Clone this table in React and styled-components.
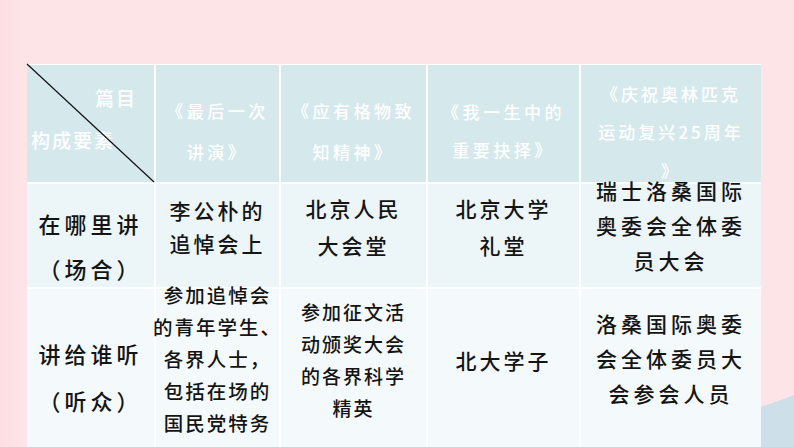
import React from 'react';
import styled, { createGlobalStyle } from 'styled-components';

const GlobalStyle = createGlobalStyle`
  html, body {
    margin: 0;
    padding: 0;
    overflow: hidden;
    background: #fde5e7;
  }
`;

const Page = styled.div`
  position: relative;
  width: 794px;
  height: 447px;
  box-sizing: border-box;
  padding: 64px 0 0 27px;
  overflow: hidden;
  background: linear-gradient(90deg, #fcdfe2 0px, #fde5e7 27px, #fde5e7 100%);
  font-family: 'Noto Sans CJK SC', 'Noto Sans', sans-serif;
`;

const Corner = styled.svg`
  position: absolute;
  right: 0;
  bottom: 0;
  width: 60px;
  height: 60px;
`;

const Table = styled.div`
  position: relative;
  display: grid;
  grid-template-columns: 127px 123px 145px 151px 180px;
  grid-template-rows: 117px 103px 171px;
  gap: 2px;
  width: max-content;
  background: #ffffff;
  border-top: 1px solid #ffffff;
`;

const tones = {
  head: '#d5e9ed',
  mid: '#ecf5f7',
  low: '#f4f9fb',
};

const Cell = styled.div`
  display: flex;
  flex-direction: column;
  justify-content: center;
  align-items: center;
  min-height: 0;
  box-sizing: border-box;
  padding-top: ${(p) => p.$pt || 0}px;
  padding-bottom: ${(p) => p.$pb || 0}px;
  background: ${(p) => tones[p.$tone]};
  text-align: center;
`;

const Text = styled.div`
  white-space: nowrap;
  font-size: ${(p) => p.$size}px;
  line-height: ${(p) => p.$lh}px;
  letter-spacing: ${(p) => p.$ls}px;
  color: ${(p) => (p.$light ? '#ffffff' : '#141414')};
  font-weight: 500;
`;

const CornerCell = styled.div`
  position: relative;
  display: flex;
  flex-direction: column;
  justify-content: center;
  box-sizing: border-box;
  padding: 0 17px 10px 4px;
  background: ${tones.head};
  color: #ffffff;
  font-size: 19px;
  font-weight: 500;
  line-height: 42px;
  letter-spacing: 2px;
`;

const CornerLabel = styled.div`
  text-align: ${(p) => p.$align};
  white-space: nowrap;
`;

const Diagonal = styled.svg`
  position: absolute;
  inset: 0;
  width: 100%;
  height: 100%;
  overflow: visible;
`;

const Lines = ({ lines, ...rest }) => (
  <Text {...rest}>
    {lines.map((l, i) => (
      <React.Fragment key={i}>
        {l}
        {i < lines.length - 1 && <br />}
      </React.Fragment>
    ))}
  </Text>
);

const head = { $size: 17, $lh: 41, $ls: 3.5, $light: true };

export default function App() {
  return (
    <>
      <GlobalStyle />
      <Page>
        <Corner viewBox="0 0 60 60">
          <path d="M0 60 L0 26 C12 24 30 20 60 8 L60 60 Z" fill="#cde0e9" />
        </Corner>
        <Table>
          <CornerCell>
            <CornerLabel $align="right">篇目</CornerLabel>
            <CornerLabel $align="left">构成要素</CornerLabel>
            <Diagonal>
              <line x1="0" y1="-1" x2="100%" y2="100%" stroke="#111" strokeWidth="1.2" />
            </Diagonal>
          </CornerCell>
          <Cell $tone="head" $pt={15}>
            <Lines {...head} lines={['《最后一次', '讲演》']} />
          </Cell>
          <Cell $tone="head" $pt={15}>
            <Lines {...head} lines={['《应有格物致', '知精神》']} />
          </Cell>
          <Cell $tone="head" $pt={15}>
            <Lines {...head} $lh={38} lines={['《我一生中的', '重要抉择》']} />
          </Cell>
          <Cell $tone="head" $pt={18}>
            <Lines {...head} $lh={38.5} $ls={3} lines={['《庆祝奥林匹克', '运动复兴25周年', '》']} />
          </Cell>

          <Cell $tone="mid" $pt={20}>
            <Lines $size={22} $lh={45} $ls={4} lines={['在哪里讲', '（场合）']} />
          </Cell>
          <Cell $tone="mid" $pb={18}>
            <Lines $size={21} $lh={33} $ls={3} lines={['李公朴的', '追悼会上']} />
          </Cell>
          <Cell $tone="mid" $pb={18}>
            <Lines $size={21} $lh={37} $ls={3} lines={['北京人民', '大会堂']} />
          </Cell>
          <Cell $tone="mid" $pb={18}>
            <Lines $size={21} $lh={37} $ls={3} lines={['北京大学', '礼堂']} />
          </Cell>
          <Cell $tone="mid" $pb={21}>
            <Lines $size={21} $lh={35} $ls={4} lines={['瑞士洛桑国际', '奥委会全体委', '员大会']} />
          </Cell>

          <Cell $tone="low" $pt={4}>
            <Lines $size={22} $lh={47} $ls={4} lines={['讲给谁听', '（听众）']} />
          </Cell>
          <Cell $tone="low" $pb={32}>
            <Lines
              $size={19.5}
              $lh={32}
              $ls={2}
              lines={['参加追悼会', '的青年学生、', '各界人士，', '包括在场的', '国民党特务']}
            />
          </Cell>
          <Cell $tone="low" $pb={29}>
            <Lines $size={19} $lh={32} $ls={2} lines={['参加征文活', '动颁奖大会', '的各界科学', '精英']} />
          </Cell>
          <Cell $tone="low" $pb={29}>
            <Lines $size={21} $lh={35} $ls={3} lines={['北大学子']} />
          </Cell>
          <Cell $tone="low" $pb={33}>
            <Lines $size={21} $lh={35} $ls={4} lines={['洛桑国际奥委', '会全体委员大', '会参会人员']} />
          </Cell>
        </Table>
      </Page>
    </>
  );
}
